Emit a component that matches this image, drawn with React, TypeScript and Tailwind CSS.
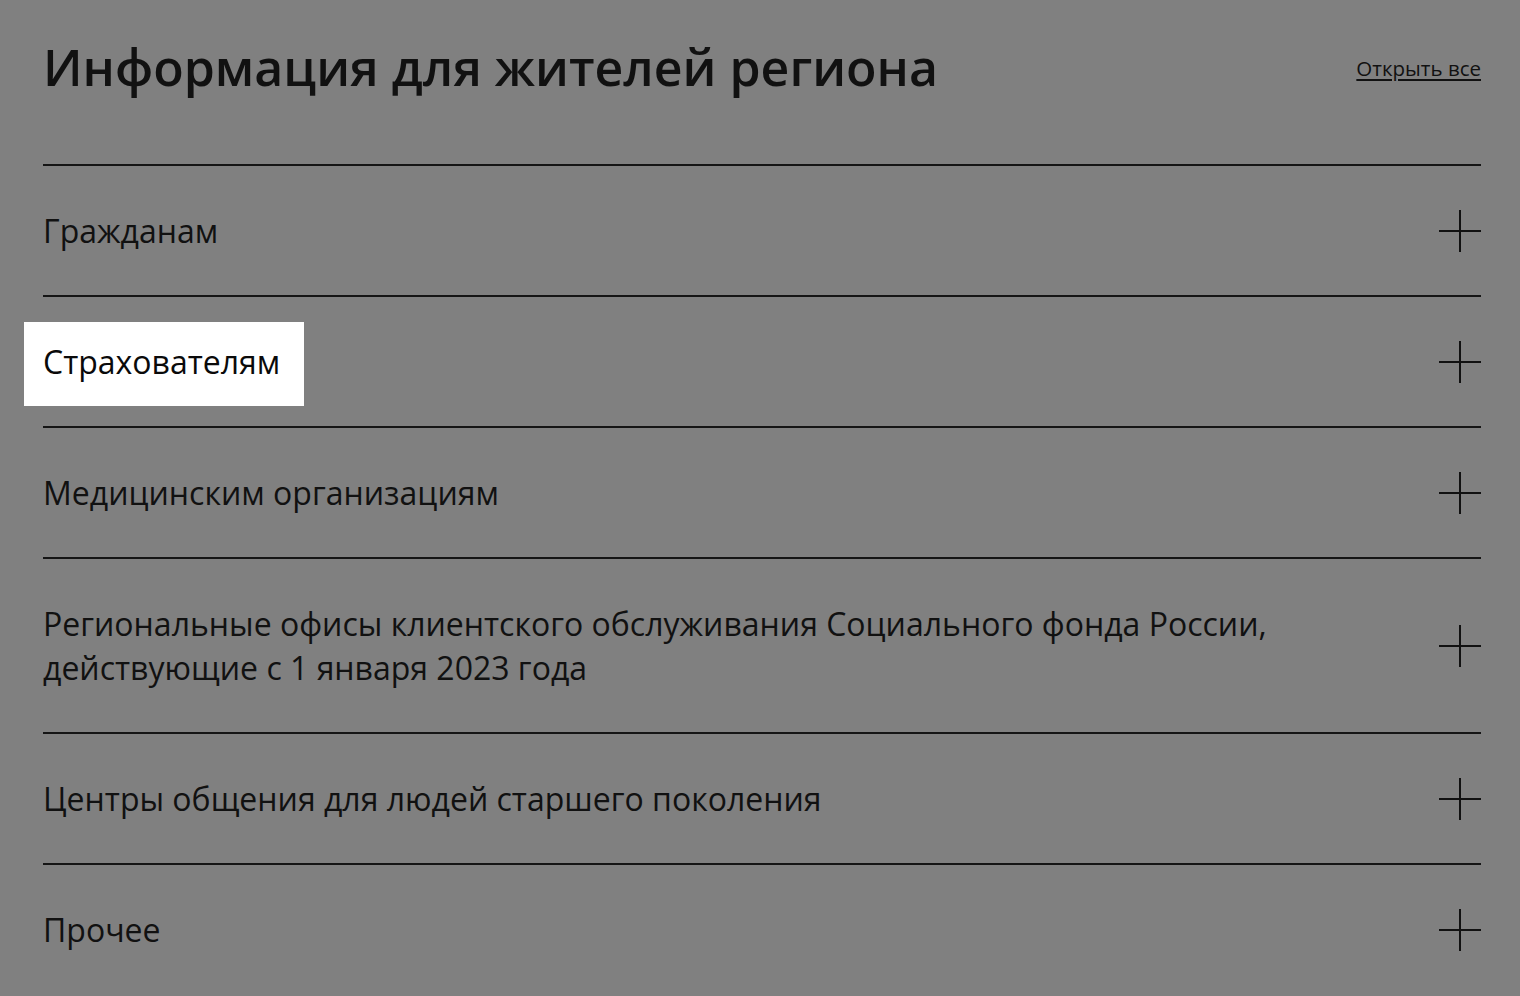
import React from "react";

const items = [
  "Гражданам",
  "Страхователям",
  "Медицинским организациям",
  "Региональные офисы клиентского обслуживания Социального фонда России, действующие с 1 января 2023 года",
  "Центры общения для людей старшего поколения",
  "Прочее",
];

function Plus() {
  return (
    <svg width="42" height="42" viewBox="0 0 42 42" className="shrink-0">
      <path d="M21 0V42M0 21H42" stroke="#111111" strokeWidth="2" />
    </svg>
  );
}

export default function App() {
  return (
    <div
      className="min-h-screen bg-[#808080] pl-[43px] pr-[39px] pt-[33px] text-[#111111]"
      style={{ fontFamily: '"Open Sans", "Noto Sans", sans-serif' }}
    >
      <div className="flex items-start justify-between">
        <h1 className="text-[50px] font-semibold leading-[68px]">
          Информация для жителей региона
        </h1>
        <a className="mt-[21px] text-[20.5px] leading-[28px] underline underline-offset-[3px]">
          Открыть все
        </a>
      </div>
      <div className="mt-[63px] border-t-2 border-[#151515]">
        {items.map((t, i) => (
          <div
            key={i}
            className={
              "flex items-center justify-between pt-[43px] pb-[42px] " +
              (i < items.length - 1 ? "border-b-2 border-[#151515]" : "")
            }
          >
            {i === 1 ? (
              <div className="-mt-[18px] -mb-[22px] -ml-[19px] bg-white pt-[18px] pb-[22px] pl-[19px] pr-[24px] text-[32px] leading-[44px] text-[#0a0a0a]">
                {t}
              </div>
            ) : (
              <div className="max-w-[1280px] text-[32px] leading-[44px]">{t}</div>
            )}
            <Plus />
          </div>
        ))}
      </div>
    </div>
  );
}
